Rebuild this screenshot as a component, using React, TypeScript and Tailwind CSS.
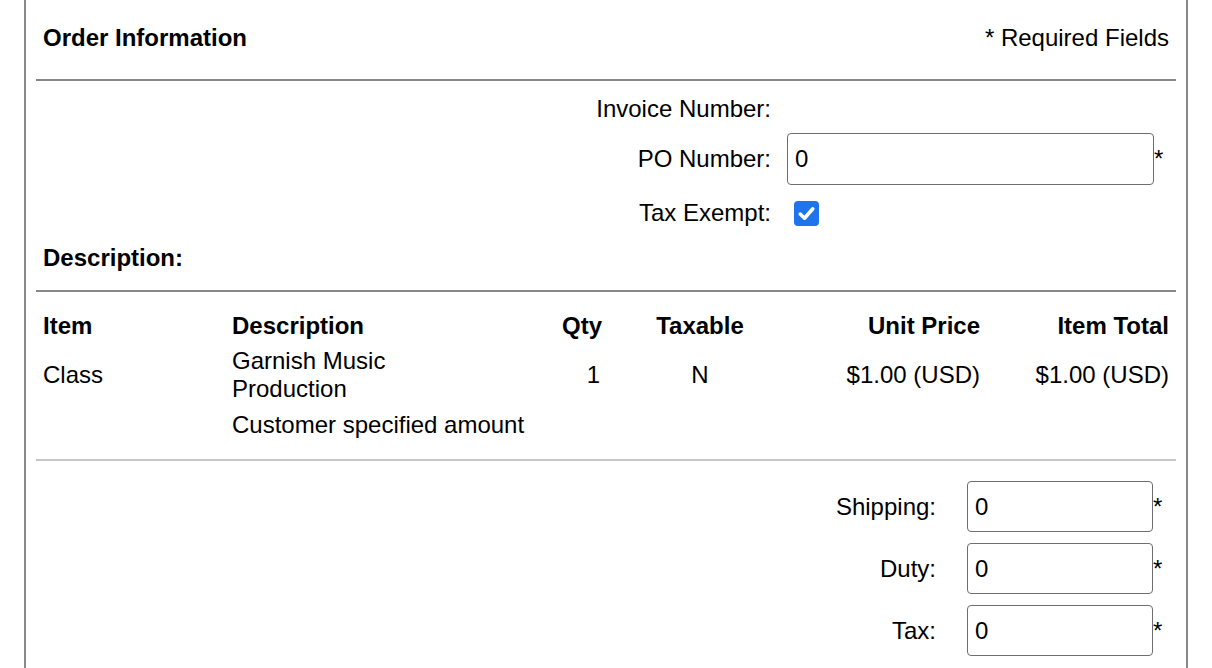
import React from "react";

function Check() {
  return (
    <span className="ml-[7px] flex h-[25px] w-[25px] items-center justify-center rounded-[4px] bg-[#1f74ee]">
      <svg width="21" height="21" viewBox="0 0 16 16" fill="none">
        <path d="M3.2 8.4 L6.5 11.6 L12.8 4.4" stroke="white" strokeWidth="2.7" strokeLinecap="round" strokeLinejoin="round" />
      </svg>
    </span>
  );
}

function Field({ w, h }: { w: string; h: string }) {
  return (
    <div className="flex items-center">
      <input
        readOnly
        value="0"
        className={`${w} ${h} rounded-[4px] border-[1.5px] border-[#6e6e6e] bg-white px-[7px] text-[24px] leading-[28px] text-black outline-none`}
      />
      <span className="leading-[28px]">*</span>
    </div>
  );
}

export default function App() {
  return (
    <div className="min-h-screen bg-white font-['Liberation_Sans',Arial,sans-serif] text-[24px] leading-[28px] text-black">
      <div className="ml-[24px] min-h-[668px] w-[1164px] border-x-2 border-[#888888] px-[10px]">
        {/* header */}
        <div className="flex justify-between px-[7px] pb-[27px] pt-[24px]">
          <div className="font-bold">Order Information</div>
          <div>* Required Fields</div>
        </div>
        <div className="h-[2px] bg-[#888888]" />

        {/* order fields */}
        <div className="mt-[14px] grid grid-cols-[735px_1fr] gap-x-[16px]">
          <div className="text-right">Invoice Number:</div>
          <div />
        </div>
        <div className="mt-[10px] grid grid-cols-[735px_1fr] items-center gap-x-[16px]">
          <div className="text-right">PO Number:</div>
          <Field w="w-[367px]" h="h-[52px]" />
        </div>
        <div className="mt-[14px] grid grid-cols-[735px_1fr] items-center gap-x-[16px]">
          <div className="text-right">Tax Exempt:</div>
          <Check />
        </div>
        <div className="mb-[18px] mt-[17px] px-[7px] font-bold">Description:</div>
        <div className="h-[2px] bg-[#888888]" />

        {/* items table */}
        <div className="mt-[20px] grid grid-cols-[189px_200px_170px_196px_182px_189px] px-[7px]">
          <div className="font-bold">Item</div>
          <div className="font-bold">Description</div>
          <div className="text-right font-bold">Qty</div>
          <div className="text-center font-bold">Taxable</div>
          <div className="text-right font-bold">Unit Price</div>
          <div className="text-right font-bold">Item Total</div>
        </div>
        <div className="mt-[7px] grid grid-cols-[189px_200px_170px_196px_182px_189px] items-center px-[7px]">
          <div>Class</div>
          <div>
            Garnish Music
            <br />
            Production
          </div>
          <div className="pr-[2px] text-right">1</div>
          <div className="text-center">N</div>
          <div className="text-right">$1.00 (USD)</div>
          <div className="text-right">$1.00 (USD)</div>
        </div>
        <div className="mt-[8px] grid grid-cols-[189px_1fr] px-[7px]">
          <div />
          <div>Customer specified amount</div>
        </div>
        <div className="mt-[20px] h-[2px] bg-[#c6c6c6]" />

        {/* totals */}
        <div className="mt-[20px] grid grid-cols-[900px_1fr] items-center gap-x-[31px]">
          <div className="text-right">Shipping:</div>
          <Field w="w-[186px]" h="h-[51px]" />
        </div>
        <div className="mt-[11px] grid grid-cols-[900px_1fr] items-center gap-x-[31px]">
          <div className="text-right">Duty:</div>
          <Field w="w-[186px]" h="h-[51px]" />
        </div>
        <div className="mt-[11px] grid grid-cols-[900px_1fr] items-center gap-x-[31px]">
          <div className="text-right">Tax:</div>
          <Field w="w-[186px]" h="h-[51px]" />
        </div>
      </div>
    </div>
  );
}
